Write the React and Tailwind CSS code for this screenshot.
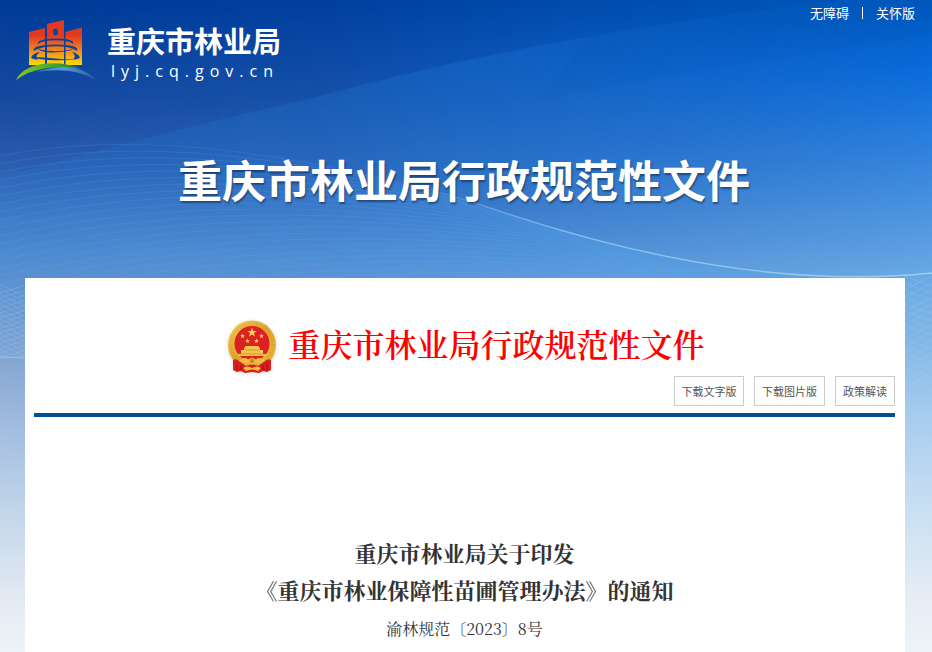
import React from "react";

// fine mesh lines of the header artwork
const WAVES = Array.from({ length: 30 }, (_, i) => i);
const MESH = Array.from({ length: 16 }, (_, i) => i);

const Backdrop = () => (
    <svg
        className="absolute inset-x-0 top-0 -z-10 h-[652px] w-full"
        viewBox="0 0 932 652"
        preserveAspectRatio="none"
        aria-hidden="true"
    >
        <defs>
            <linearGradient id="skyLeft" x1="0" y1="0" x2="0" y2="1">
                <stop offset="0" stopColor="#003a98" />
                <stop offset="0.15" stopColor="#164a9f" />
                <stop offset="0.26" stopColor="#2c5cae" />
                <stop offset="0.34" stopColor="#4373bd" />
                <stop offset="0.42" stopColor="#5c88c6" />
                <stop offset="0.55" stopColor="#85a5d2" />
                <stop offset="0.68" stopColor="#a8c2e2" />
                <stop offset="0.8" stopColor="#c6d8eb" />
                <stop offset="0.92" stopColor="#e3eaf2" />
                <stop offset="1" stopColor="#eef3f7" />
            </linearGradient>
            <linearGradient id="skyRight" x1="0" y1="0" x2="0" y2="1">
                <stop offset="0" stopColor="#0059bd" />
                <stop offset="0.1" stopColor="#0a6bdb" />
                <stop offset="0.17" stopColor="#1e77dd" />
                <stop offset="0.28" stopColor="#3f8bde" />
                <stop offset="0.42" stopColor="#68a8e4" />
                <stop offset="0.53" stopColor="#85b8e6" />
                <stop offset="0.64" stopColor="#a8cdee" />
                <stop offset="0.78" stopColor="#c9dff2" />
                <stop offset="0.92" stopColor="#e6edf5" />
                <stop offset="1" stopColor="#eef3f7" />
            </linearGradient>
            <linearGradient id="fadeRight" x1="0" y1="0" x2="1" y2="0">
                <stop offset="0" stopColor="#000" />
                <stop offset="0.35" stopColor="#2a2a2a" />
                <stop offset="0.65" stopColor="#999" />
                <stop offset="1" stopColor="#fff" />
            </linearGradient>
            <linearGradient id="ridge" x1="0" y1="0" x2="1" y2="0">
                <stop offset="0" stopColor="#8fc8f2" stopOpacity="0" />
                <stop offset="0.3" stopColor="#8fc8f2" stopOpacity="0.8" />
                <stop offset="1" stopColor="#a5d4f0" stopOpacity="0.9" />
            </linearGradient>
            <linearGradient id="band" x1="0" y1="0" x2="1" y2="0">
                <stop offset="0" stopColor="#2475cf" stopOpacity="0.25" />
                <stop offset="0.5" stopColor="#1c78d6" stopOpacity="0.32" />
                <stop offset="1" stopColor="#1478d8" stopOpacity="0" />
            </linearGradient>
            <linearGradient id="bandFade" gradientUnits="userSpaceOnUse" x1="0" y1="150" x2="0" y2="300">
                <stop offset="0" stopColor="#fff" />
                <stop offset="1" stopColor="#000" />
            </linearGradient>
            <linearGradient id="hill" gradientUnits="userSpaceOnUse" x1="0" y1="150" x2="0" y2="358">
                <stop offset="0" stopColor="#3f94e6" stopOpacity="0" />
                <stop offset="0.5" stopColor="#4d9fea" stopOpacity="0.35" />
                <stop offset="1" stopColor="#6fb0e8" stopOpacity="0.1" />
            </linearGradient>
            <mask id="rightMask">
                <rect width="932" height="652" fill="url(#fadeRight)" />
            </mask>
            <mask id="bandMask">
                <rect width="932" height="652" fill="url(#bandFade)" />
            </mask>
            <clipPath id="belowRidge">
                <path d="M0 150Q250 125 466 202L490 208Q740 293 932 273V400H904V358H0Z" />
            </clipPath>
        </defs>
        <rect width="932" height="652" fill="url(#skyLeft)" />
        <rect width="932" height="652" fill="url(#skyRight)" mask="url(#rightMask)" />
        <path d="M0 178Q150 134 305 100Q570 26 932 -10V300H0Z" fill="url(#band)" mask="url(#bandMask)" />
        <path d="M540 100Q720 65 932 35V0H620Z" fill="#0047a8" opacity="0.08" />
        <g clipPath="url(#belowRidge)">
            <rect y="140" width="904" height="218" fill="url(#hill)" />
            <g fill="none" stroke="#62b2f4" strokeWidth="0.8" opacity="0.22">
                {WAVES.map((i) => (
                    <path
                        key={i}
                        d={`M0 ${156 + i * 8}Q${190 + i * 8} ${118 + i * 6} ${470 + i * 13} ${204 + i * 4}`}
                    />
                ))}
            </g>
            <g fill="none" stroke="#a3d2f5" strokeWidth="0.7" opacity="0.35">
                {MESH.map((i) => (
                    <path key={i} d={`M0 ${293 + i * 5}L26 ${285 + i * 5}M0 ${284 + i * 5}L26 ${297 + i * 5}`} />
                ))}
                {MESH.map((i) => (
                    <path key={i} d={`M904 ${290 + i * 7}L932 ${276 + i * 7}M904 ${276 + i * 7}L932 ${286 + i * 7}`} />
                ))}
            </g>
        </g>
        <path d="M400 182Q445 193 490 208Q740 293 932 273" fill="none" stroke="url(#ridge)" strokeWidth="1.4" />
        <path d="M0 357L26 358" stroke="#8fc1ec" strokeWidth="1" />
    </svg>
);

const BureauLogo = () => (
    <svg className="h-[62px] w-20 shrink-0" viewBox="0 0 80 62" aria-hidden="true">
        <defs>
            <linearGradient id="towers" gradientUnits="userSpaceOnUse" x1="0" y1="8" x2="0" y2="46">
                <stop offset="0.2" stopColor="#e23a20" />
                <stop offset="0.55" stopColor="#f08020" />
                <stop offset="1" stopColor="#ffe000" />
            </linearGradient>
            <linearGradient id="grass" x1="0" y1="0" x2="1" y2="0">
                <stop offset="0" stopColor="#8cc81e" />
                <stop offset="0.6" stopColor="#3fa535" />
                <stop offset="1" stopColor="#1d7a50" />
            </linearGradient>
            <linearGradient id="river" x1="0" y1="0" x2="1" y2="0">
                <stop offset="0" stopColor="#3a78c0" />
                <stop offset="0.45" stopColor="#5b9ad8" />
                <stop offset="1" stopColor="#2a5cab" />
            </linearGradient>
        </defs>
        <g fill="url(#towers)">
            <path d="M13 12L29 8V45H13Z" />
            <path d="M31 4L48 0V44H31Z" />
            <path d="M49.500 12L66 7.500V45H49.500Z" />
        </g>
        {/* roof tiers, heavier towards their ends */}
        <g fill="#0f439c">
            <path d="M22 24Q21 18.500 40 18.500T57 24Q53 20.300 40 20.300T22 24Z" />
            <path d="M17.500 31Q16 24.500 40 24.500T61 31Q55 26.300 40 26.300T17.500 31Z" />
            <path d="M22 29Q40 33.500 57 29Q54 31.500 40 32.300T22 29Z" />
            <path d="M15 37Q24 36.500 40 38.500T64 37Q57 40.500 40 40.300T15 37Z" />
            <path d="M15 37.500Q17 33 24 32Q18 36 22 39.500Q17 40 15 37.500ZM64 37.500Q62 33 56 32Q61 36 57 39.500Q62 40 64 37.500Z" />
        </g>
        <ellipse cx="39.500" cy="12" rx="2.400" ry="3.400" fill="#0f439c" />
        <path d="M0 60Q7 46 30 43.500Q50 42 65 49Q45 46 29 48.500Q12 51 0 60Z" fill="url(#grass)" />
        <path d="M20 52Q60 39 80 60Q57 46 20 52Z" fill="url(#river)" />
    </svg>
);

const STAR = "M0 -1L0.24 -0.32L0.95 -0.31L0.38 0.12L0.59 0.81L0 0.4L-0.59 0.81L-0.38 0.12L-0.95 -0.31L-0.24 -0.32Z";

const Emblem = () => (
    <svg className="h-14 w-12 shrink-0 drop-shadow-sm" viewBox="1 -1 48 56" aria-hidden="true">
        <defs>
            <linearGradient id="gold" x1="0" y1="0" x2="1" y2="1">
                <stop offset="0" stopColor="#f5cf55" />
                <stop offset="0.5" stopColor="#dda52c" />
                <stop offset="1" stopColor="#efbd42" />
            </linearGradient>
        </defs>
        <ellipse cx="25" cy="25" rx="24" ry="24.500" fill="url(#gold)" />
        <circle cx="25" cy="25" r="21" fill="none" stroke="#c8871c" strokeWidth="3" strokeDasharray="1 1.500" opacity="0.35" />
        <circle cx="25" cy="23.500" r="17.500" fill="#dc2023" />
        <path d="M6 40Q9 38 12 41L19 46L25 44L31 46L38 41Q41 38 44 40V50L40 52L36 51L32 53L25 52L18 53L14 51L10 52L6 50Z" fill="#d71f20" />
        <path d="M10 43V51M14 45V50M36 45V50M40 43V51" stroke="#a71218" strokeWidth="1" />
        <g fill="#f9d35b">
            <path d={STAR} transform="translate(25 12.500) scale(5)" />
            <path d={STAR} transform="translate(15.500 16) scale(2.700)" />
            <path d={STAR} transform="translate(34.500 16) scale(2.700)" />
            <path d={STAR} transform="translate(20.500 21) scale(2.700)" />
            <path d={STAR} transform="translate(29.500 21) scale(2.700)" />
        </g>
        <path d="M17 28L19 26H31L33 28V30H36V34H39V36H11V34H14V30H17Z" fill="#f3c54c" />
        <path d="M18 30H32M12 34H38" stroke="#c98f24" strokeWidth="0.800" />
        <path d="M12 41Q18 36 21 39.500L25 37.500L29 39.500Q32 36 38 41Q32 45 29 42.500L25 45L21 42.500Q18 45 12 41Z" fill="#efbd42" />
        <circle cx="25" cy="41" r="2.200" fill="#c98a20" />
        <path d="M16 48Q20 45 25 48Q30 45 34 48L31 51Q25 48 19 51Z" fill="#efbd42" />
    </svg>
);

const actions = [
    { label: "下载文字版", width: "w-[70px]" },
    { label: "下载图片版", width: "w-[71px]" },
    { label: "政策解读", width: "w-[60px]" },
];

const App = () => (
    <div className="relative isolate flex min-h-screen flex-col bg-[#eef3f7] font-['Noto_Sans_CJK_SC',sans-serif]">
        <Backdrop />

        <header className="flex items-start justify-between pl-4 text-white">
            <a href="#home" className="flex pt-5">
                <BureauLogo />
                <span className="flex flex-col pl-[11px]">
                    <span className="text-[29px] leading-10 font-bold">重庆市林业局</span>
                    <span className="pl-1 font-['Open_Sans',sans-serif] text-base leading-[22px] tracking-[6px]">
                        lyj.cq.gov.cn
                    </span>
                </span>
            </a>
            <nav className="flex items-center gap-[13px] pt-1 pr-[17px] text-[13px] leading-[18px]">
                <a href="#accessible">无障碍</a>
                <span className="h-3 w-px bg-white" />
                <a href="#care">关怀版</a>
            </nav>
        </header>

        <h1 className="pt-16 pr-1 text-center text-[44px] leading-[66px] font-bold text-white text-shadow-[1px_2px_2px_rgba(0,0,0,0.4)]">
            重庆市林业局行政规范性文件
        </h1>

        <main className="mx-auto mt-[66px] flex w-full max-w-[1200px] flex-1 flex-col pr-[27px] pl-[25px]">
            <article className="flex-1 bg-white pr-2.5 pb-2 pl-[9px] font-['Noto_Serif_CJK_SC','Noto_Sans_CJK_SC',serif] text-[#333]">
                <div className="flex items-start justify-center gap-3 pt-[41px] pl-1">
                    <Emblem />
                    <h2 className="text-[32px] leading-[48px] font-semibold text-[#f00]">
                        重庆市林业局行政规范性文件
                    </h2>
                </div>

                <div className="flex justify-end gap-2.5 border-b-4 border-[#005293] pt-px pb-[7px] font-['Noto_Sans_CJK_SC',sans-serif]">
                    {actions.map(({ label, width }) => (
                        <button
                            key={label}
                            type="button"
                            className={`${width} h-[30px] border border-[#ccc] text-[11px] whitespace-nowrap text-[#555]`}
                        >
                            {label}
                        </button>
                    ))}
                </div>

                <h3 className="pt-[117px] text-center text-[22px] leading-[37px] font-bold">
                    重庆市林业局关于印发
                    <br />
                    《重庆市林业保障性苗圃管理办法》的通知
                </h3>
                <p className="text-center text-base leading-[42px]">渝林规范〔2023〕8号</p>
            </article>
        </main>
    </div>
);

export default App;
